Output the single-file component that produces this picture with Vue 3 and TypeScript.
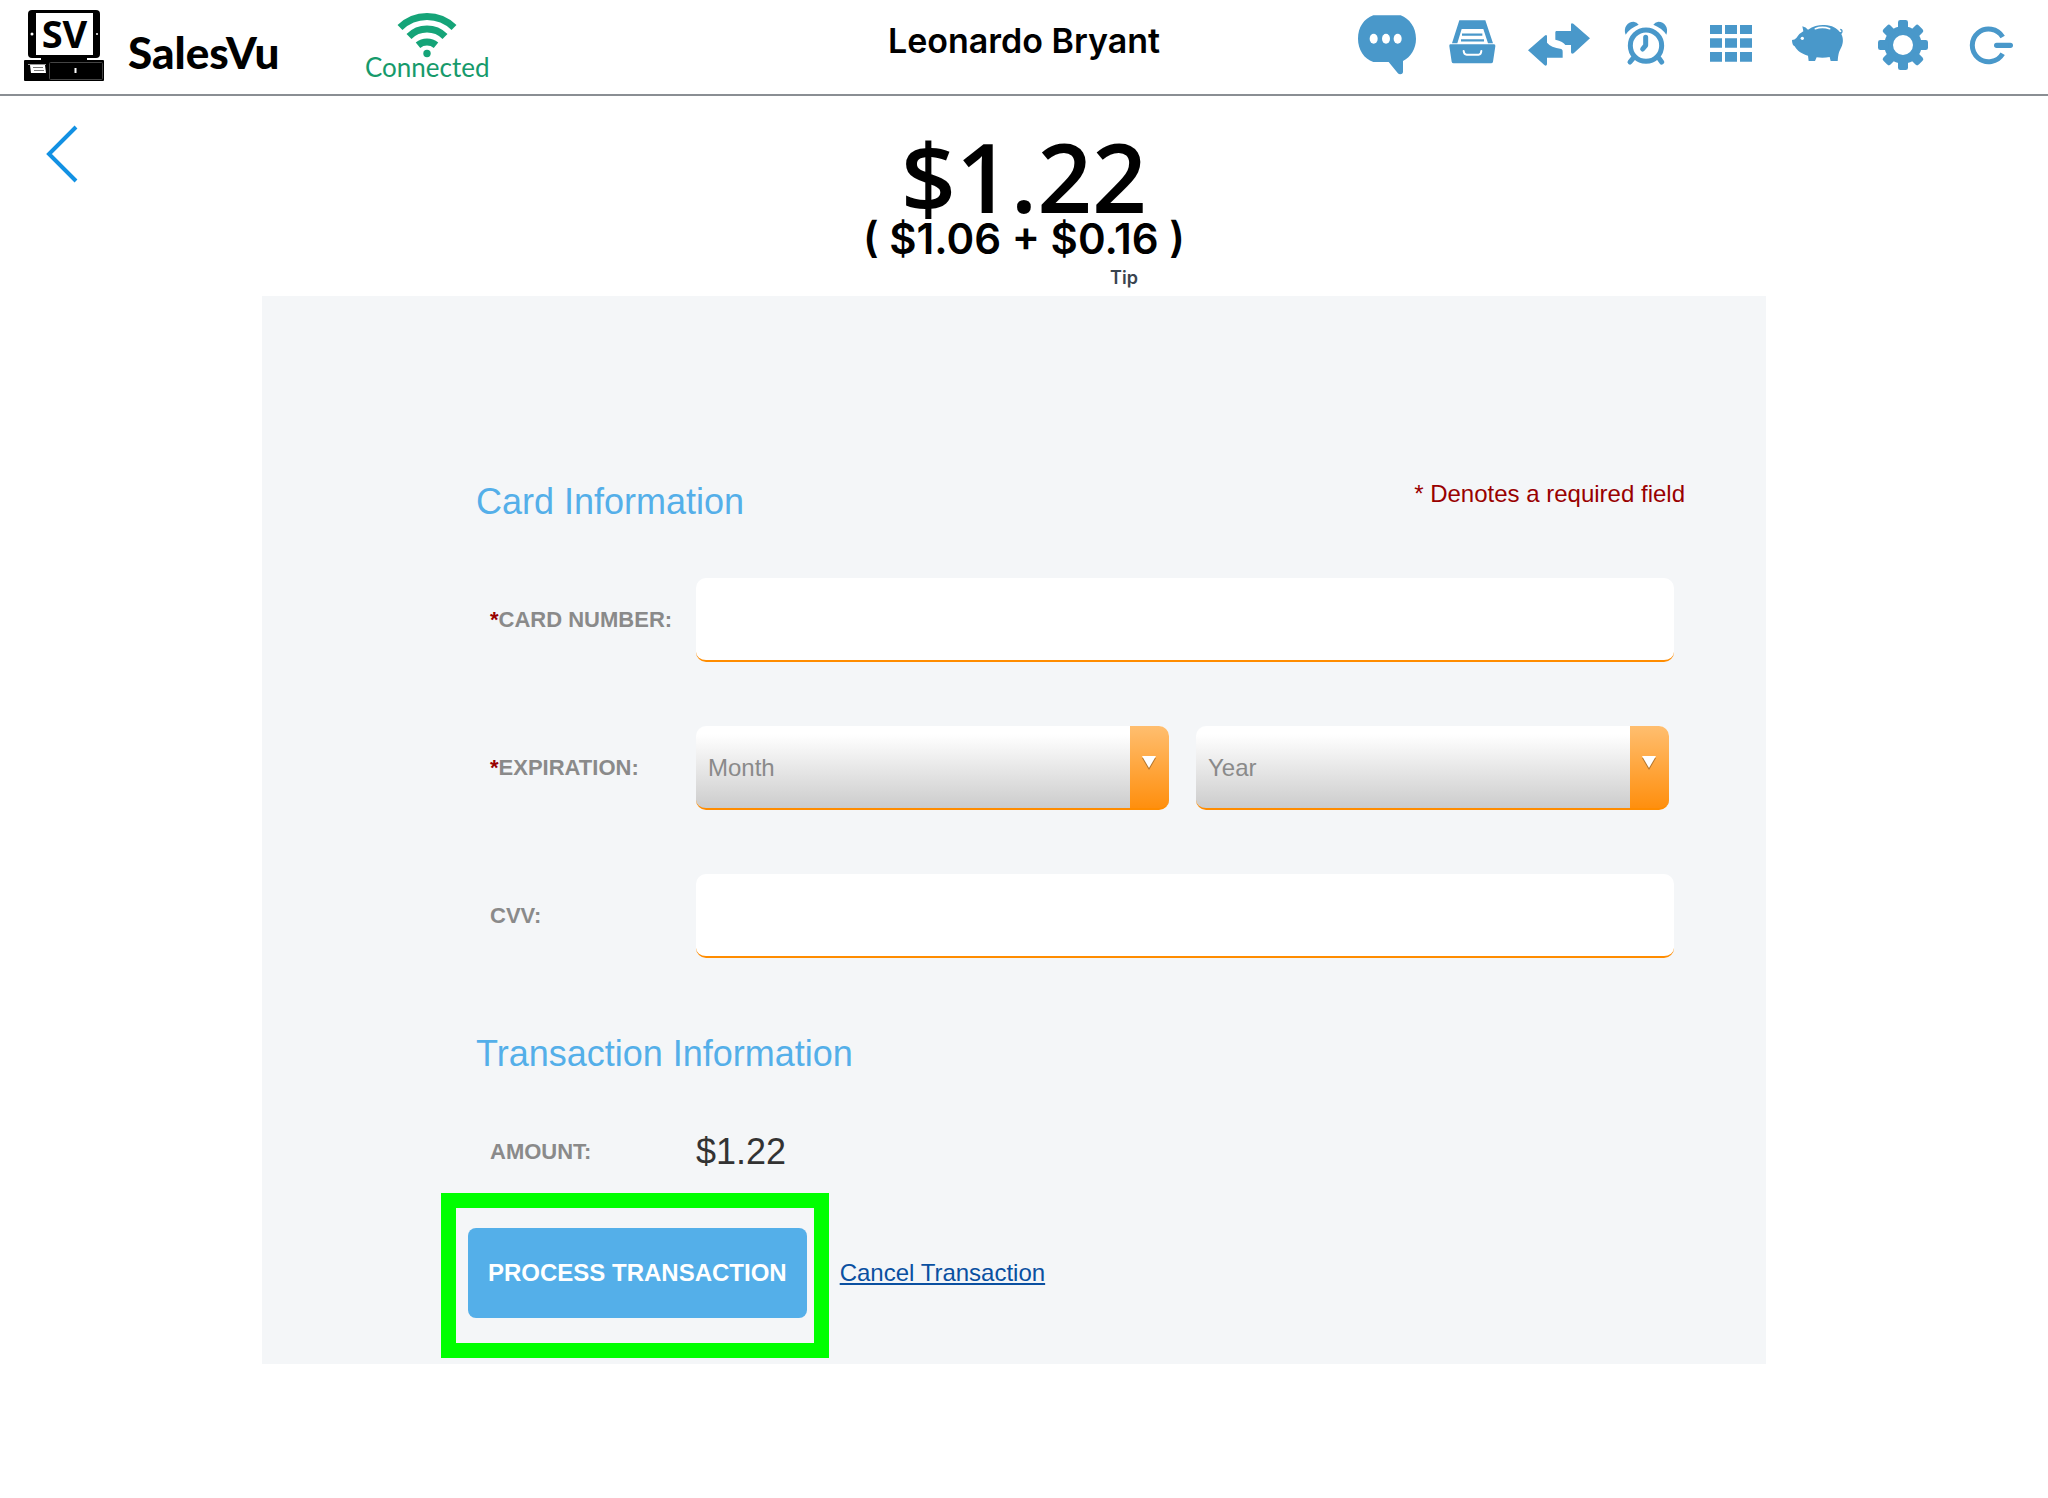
<script setup lang="ts">
import { ref } from 'vue'

const cardNumber = ref('')
const month = ref('')
const year = ref('')
const cvv = ref('')

const months = Array.from({ length: 12 }, (_, i) => String(i + 1).padStart(2, '0'))
const years = Array.from({ length: 12 }, (_, i) => String(2020 + i))
const gearTeeth = [0, 45, 90, 135, 180, 225, 270, 315]
</script>

<template>
  <div class="page">
    <header class="topbar">
      <div class="left">
        <a class="brand" href="#">
          <svg class="logo" viewBox="24 0 80 81" aria-hidden="true">
            <rect x="28" y="10" width="72" height="48" rx="4" />
            <rect x="36" y="13" width="57" height="42" fill="#fff" />
            <circle cx="32" cy="34" r="1.5" fill="#fff" />
            <circle cx="97" cy="34" r="1" fill="#fff" />
            <text x="64.500" y="48" text-anchor="middle" class="logo-text">SV</text>
            <rect x="41" y="57" width="46" height="4" />
            <rect x="24" y="60" width="80" height="21" rx="1" />
            <rect x="49.500" y="62.500" width="53" height="17" rx="1" fill="none" stroke="#444" />
            <path d="M28 64.500h18" stroke="#999" />
            <path d="M30 65h15l1 8H31z" fill="#fff" />
            <path d="M33 67.500h10M34 70.500h10" stroke="#777" />
            <path d="M74.500 68h2v5h-2z" fill="#fff" />
          </svg>
          <span class="brand-name">SalesVu</span>
        </a>
        <div class="status">
          <svg class="wifi" viewBox="397 12 60 46" fill="none" stroke="#15a478" stroke-width="7" aria-hidden="true">
            <path d="M400 27.500A38.500 38.500 0 0 1 454 27.500" />
            <path d="M409 36.500A25.500 25.500 0 0 1 445 36.500" />
            <path d="M418 45.200A14 14 0 0 1 436 45.200" />
            <circle cx="427" cy="53.500" r="3.700" fill="#15a478" stroke="none" />
          </svg>
          <span>Connected</span>
        </div>
      </div>

      <div class="user">Leonardo Bryant</div>

      <nav class="tools">
        <button type="button" aria-label="Messages">
          <svg viewBox="12 0 258 264">
            <path d="M100 46H182C208 56 228 82 228 116C228 146 213 170 189 183V217Q188 223 181 223Q176 223 173 219L146 186H100C72 176 54 149 54 116C54 82 72 56 100 46Z" />
            <g fill="#fff"><ellipse cx="101" cy="116" rx="12" ry="15" /><ellipse cx="138" cy="116" rx="12" ry="15" /><ellipse cx="173" cy="116" rx="12" ry="15" /></g>
          </svg>
        </button>
        <button type="button" aria-label="Orders">
          <svg viewBox="270 0 258 264">
            <path d="M358 61H436L459 130H444L430 87H365L352 130H336Z" />
            <path d="M366 104H427M363 121H432" stroke="#4998ca" stroke-width="7" fill="none" />
            <path d="M331 133H462Q467 133 466 139L459 185Q458 190 453 190H341Q336 190 335 185L328 139Q327 133 331 133Z" />
            <path d="M371 153Q372 164 380 164H416Q423 164 424 153" fill="none" stroke="#fff" stroke-width="6" stroke-linecap="round" />
          </svg>
        </button>
        <button type="button" aria-label="Transfer">
          <svg viewBox="528 0 258 264">
            <path d="M648 93H693V73Q694 67 700 71L750 115L701 160Q694 164 693 157V135H676Q670 124 646 119V96Z" />
            <path d="M564 151L614 107Q620 102 621 109V128Q632 142 664 147Q669 150 668 155V173H621V193Q619 200 613 195Z" />
          </svg>
        </button>
        <button type="button" aria-label="Time clock">
          <svg viewBox="786 0 258 264">
            <path d="M857 104C849 83 862 65 881 65Q891 66 896 74Q870 84 857 104Z" />
            <path d="M979 104C987 83 974 65 955 65Q945 66 940 74Q966 84 979 104Z" />
            <circle cx="918" cy="137" r="47" fill="none" stroke="#4998ca" stroke-width="15" />
            <path d="M917 112V136L908 147" fill="none" stroke="#4998ca" stroke-width="15" stroke-linecap="round" stroke-linejoin="round" />
            <path d="M879 175L870 186M957 175L965 186" stroke="#4998ca" stroke-width="15" stroke-linecap="round" />
          </svg>
        </button>
        <button type="button" aria-label="Menu">
          <svg viewBox="-6 0 258 264">
            <path d="M60 75h36v27H60zM105 75h36v27h-36zM150 75h36v27h-36zM60 115h36v28H60zM105 115h36v28h-36zM150 115h36v28h-36zM60 156h36v29H60zM105 156h36v29h-36zM150 156h36v29h-36z" />
          </svg>
        </button>
        <button type="button" aria-label="Savings">
          <svg viewBox="252 0 258 264">
            <path d="M337 79Q348 82 354 89C370 77 390 74 404 75C426 76 441 84 450 97Q456 96 454 92Q448 90 451 86Q458 86 458 94Q458 99 454 102C462 118 459 134 451 148Q444 161 443 183H422L419 171Q400 175 380 172L375 183H356L354 167C335 162 321 152 314 139Q306 136 306 120Q314 120 319 114Q326 101 340 94Z" />
            <circle cx="337" cy="115" r="5" fill="#fff" />
            <path d="M376 86Q397 78 419 86" fill="none" stroke="#fff" stroke-width="5" stroke-linecap="round" />
          </svg>
        </button>
        <button type="button" aria-label="Settings">
          <svg viewBox="510 0 258 264">
            <circle cx="639" cy="135" r="43" fill="none" stroke="#4998ca" stroke-width="26" />
            <rect v-for="angle in gearTeeth" :key="angle" x="624" y="60" width="30" height="32" rx="7" :transform="`rotate(${angle} 639 135)`" />
          </svg>
        </button>
        <button type="button" aria-label="Log out">
          <svg viewBox="768 0 258 264">
            <path d="M938 111A49 49 0 1 0 938 161" fill="none" stroke="#4998ca" stroke-width="15" />
            <path d="M920 136H961" stroke="#4998ca" stroke-width="16" stroke-linecap="round" />
          </svg>
        </button>
      </nav>
    </header>

    <section class="summary">
      <button type="button" class="back" aria-label="Back">
        <svg viewBox="0 0 32 60" fill="none" stroke="#1291e3" stroke-width="4"><path d="M30 3L3 30L30 57" /></svg>
      </button>
      <div class="totals">
        <h1>$1.22</h1>
        <div class="breakdown">( $1.06 + $0.16 )</div>
        <div class="tip">Tip</div>
      </div>
    </section>

    <form class="panel" @submit.prevent>
      <div class="heading">
        <h2>Card Information</h2>
        <span class="required-note">* Denotes a required field</span>
      </div>
      <div class="fields">
        <label for="card"><span class="star">*</span>CARD NUMBER:</label>
        <input id="card" v-model="cardNumber" type="text" inputmode="numeric" />

        <label for="month"><span class="star">*</span>EXPIRATION:</label>
        <div class="selects">
          <div class="select">
            <select id="month" v-model="month">
              <option value="">Month</option>
              <option v-for="m in months" :key="m">{{ m }}</option>
            </select>
            <svg viewBox="0 0 14 14" aria-hidden="true"><path d="M0 2h14L7 14z" fill="#000" opacity=".3" /><path d="M0 0h14L7 12z" fill="#fff" /></svg>
          </div>
          <div class="select">
            <select v-model="year" aria-label="Expiration year">
              <option value="">Year</option>
              <option v-for="y in years" :key="y">{{ y }}</option>
            </select>
            <svg viewBox="0 0 14 14" aria-hidden="true"><path d="M0 2h14L7 14z" fill="#000" opacity=".3" /><path d="M0 0h14L7 12z" fill="#fff" /></svg>
          </div>
        </div>

        <label for="cvv">CVV:</label>
        <input id="cvv" v-model="cvv" type="text" inputmode="numeric" />
      </div>

      <div class="heading second">
        <h2>Transaction Information</h2>
      </div>
      <div class="fields amount">
        <span class="label">AMOUNT:</span>
        <span class="value">$1.22</span>
      </div>

      <div class="actions">
        <div class="highlight">
          <button type="submit">PROCESS TRANSACTION</button>
        </div>
        <a href="#">Cancel Transaction</a>
      </div>
    </form>
  </div>
</template>

<style>
body {
  background: #fff;
}
</style>

<style scoped>
.page {
  font-family: "Liberation Sans", Arial, sans-serif;
  color: #000;
}
* {
  box-sizing: border-box;
}
h1,
h2 {
  margin: 0;
}
button {
  padding: 0;
  border: 0;
  background: none;
  font-family: inherit;
  cursor: pointer;
}
svg {
  display: block;
}
.topbar {
  display: grid;
  grid-template-columns: 1fr auto 1fr;
  height: 96px;
  border-bottom: 2px solid #8a8e93;
}
.left {
  display: flex;
  align-items: flex-start;
  gap: 85px;
  padding-left: 24px;
}
.brand {
  display: flex;
  align-items: flex-start;
  gap: 24px;
  color: #000;
  text-decoration: none;
}
.logo {
  width: 80px;
  height: 81px;
  overflow: visible;
}
.logo-text {
  font: 700 38px "Noto Sans", sans-serif;
}
.brand-name {
  width: 152px;
  padding-top: 22px;
  font: 900 44px/60px Lato, sans-serif;
}
.status {
  display: flex;
  flex-direction: column;
  align-items: center;
  padding-top: 12px;
  color: #169a6b;
  font: 400 26px/18px Lato, sans-serif;
}
.wifi {
  width: 60px;
  height: 46px;
}
.user {
  padding-top: 21px;
  font: 600 34px/40px Inter, sans-serif;
}
.tools {
  display: flex;
  justify-content: flex-end;
  padding-right: 16px;
}
.tools button {
  width: 86px;
  height: 88px;
}
.tools svg {
  width: 86px;
  height: 88px;
  fill: #4998ca;
}
.summary {
  display: grid;
  grid-template-columns: 1fr auto 1fr;
  height: 200px;
}
.back {
  justify-self: start;
  align-self: start;
  margin: 28px 0 0 46px;
}
.back svg {
  width: 32px;
  height: 60px;
}
.totals {
  padding-top: 38px;
  text-align: center;
}
h1 {
  margin-bottom: 6px;
  font: 600 96px/84px "Open Sans", sans-serif;
}
.breakdown {
  font: 600 42px/30px Inter, sans-serif;
}
.tip {
  margin-top: 14px;
  padding-left: 200px;
  color: #3a444f;
  font: 600 18px/20px Inter, sans-serif;
}
.panel {
  margin: 0 282px 0 262px;
  padding: 184px 81px 6px 179px;
  background: #f4f6f8;
}
.heading {
  display: flex;
  justify-content: space-between;
  align-items: flex-start;
  padding-left: 35px;
  margin-bottom: 54px;
}
.second {
  margin-top: 74px;
}
h2 {
  color: #54afe9;
  font-size: 36px;
  font-weight: 400;
  line-height: 44px;
}
.required-note {
  color: #990000;
  font-size: 24px;
  line-height: 28px;
}
.fields {
  display: grid;
  grid-template-columns: 206px 1fr;
  row-gap: 64px;
  align-items: center;
  padding: 0 11px 0 49px;
}
label,
.label {
  color: #8a8a8a;
  font-size: 22px;
  font-weight: 700;
  line-height: 28px;
}
.star {
  color: #990000;
}
input,
select {
  width: 100%;
  height: 84px;
  padding: 0 12px;
  border: 0;
  border-bottom: 2px solid #ff8c00;
  border-radius: 10px;
  background: #fff;
  color: #8a8a8a;
  font: 400 24px "Liberation Sans", Arial, sans-serif;
}
.selects {
  display: grid;
  grid-template-columns: 1fr 1fr;
  gap: 27px;
  padding-right: 5px;
}
.select {
  position: relative;
}
select {
  display: block;
  appearance: none;
  background:
    linear-gradient(#ffbe6f, #ff8f0e) right / 39px 100% no-repeat,
    linear-gradient(#fff 10%, #ccc);
}
.select svg {
  position: absolute;
  top: 30px;
  right: 13px;
  width: 14px;
  height: 14px;
  pointer-events: none;
}
.value {
  color: #333;
  font-size: 36px;
  line-height: 44px;
}
.actions {
  display: flex;
  align-items: baseline;
  gap: 11px;
  margin-top: 19px;
}
.highlight {
  padding: 20px 7px 25px 12px;
  border: 15px solid #00ff00;
}
.highlight button {
  display: block;
  height: 90px;
  padding: 0 20px;
  border-radius: 8px;
  background: #54afe9;
  color: #fff;
  font-size: 24px;
  font-weight: 700;
}
.actions a {
  color: #0a50a1;
  font-size: 24px;
  line-height: 28px;
}
</style>
